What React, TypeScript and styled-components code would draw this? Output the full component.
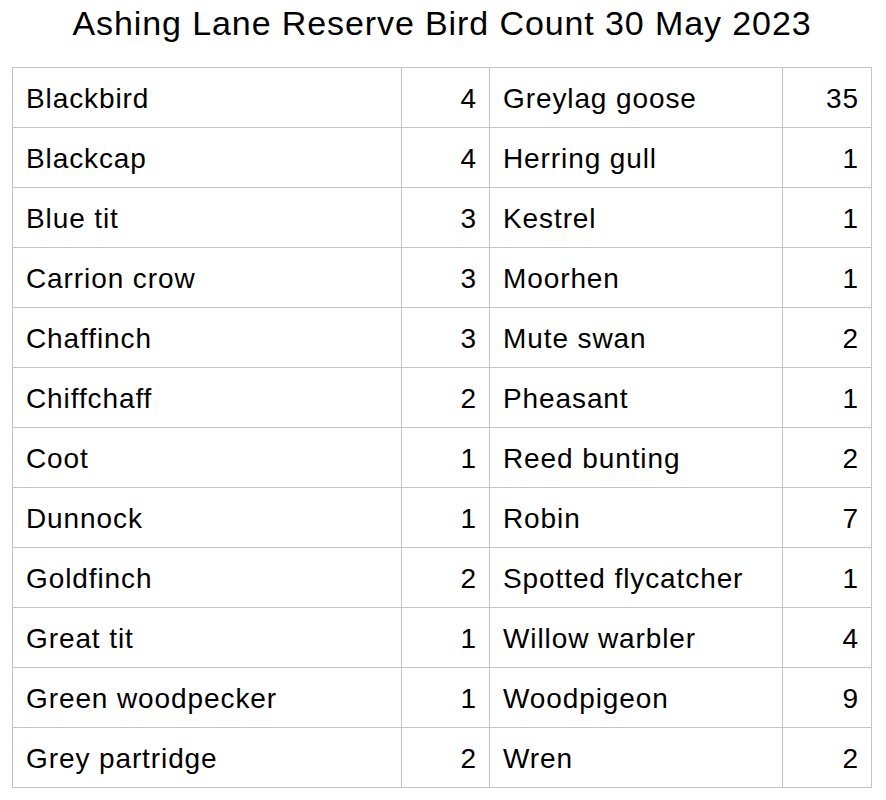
import React from "react";
import styled, { createGlobalStyle } from "styled-components";

// ---------------------------------------------------------------------------
// Data
// ---------------------------------------------------------------------------

type Sighting = { name: string; count: number };

const LEFT: Sighting[] = [
  { name: "Blackbird", count: 4 },
  { name: "Blackcap", count: 4 },
  { name: "Blue tit", count: 3 },
  { name: "Carrion crow", count: 3 },
  { name: "Chaffinch", count: 3 },
  { name: "Chiffchaff", count: 2 },
  { name: "Coot", count: 1 },
  { name: "Dunnock", count: 1 },
  { name: "Goldfinch", count: 2 },
  { name: "Great tit", count: 1 },
  { name: "Green woodpecker", count: 1 },
  { name: "Grey partridge", count: 2 },
];

const RIGHT: Sighting[] = [
  { name: "Greylag goose", count: 35 },
  { name: "Herring gull", count: 1 },
  { name: "Kestrel", count: 1 },
  { name: "Moorhen", count: 1 },
  { name: "Mute swan", count: 2 },
  { name: "Pheasant", count: 1 },
  { name: "Reed bunting", count: 2 },
  { name: "Robin", count: 7 },
  { name: "Spotted flycatcher", count: 1 },
  { name: "Willow warbler", count: 4 },
  { name: "Woodpigeon", count: 9 },
  { name: "Wren", count: 2 },
];

// ---------------------------------------------------------------------------
// Styled
// ---------------------------------------------------------------------------

const GlobalStyle = createGlobalStyle`
  html, body {
    margin: 0;
    padding: 0;
    background: #ffffff;
  }
  body {
    font-family: "Liberation Sans", Arial, sans-serif;
    color: #000000;
  }
`;

const Page = styled.div`
  width: 886px;
  padding: 4px 0 0 12px;
  box-sizing: border-box;
`;

const Title = styled.h1`
  margin: 0;
  width: 860px;
  height: 63px;
  font-size: 34px;
  font-weight: 400;
  line-height: 38px;
  text-align: center;
  letter-spacing: 0.9px;
`;

const Table = styled.table`
  border-collapse: collapse;
  table-layout: fixed;
  width: 860px;
`;

const Row = styled.tr`
  height: 60px;
`;

const Cell = styled.td<{ $num?: boolean }>`
  border: 1px solid #c4c4c4;
  padding: 3px ${(p) => (p.$num ? "12px" : "13px")} 0;
  font-size: 28px;
  letter-spacing: 0.9px;
  text-align: ${(p) => (p.$num ? "right" : "left")};
  vertical-align: middle;
  white-space: nowrap;
`;

// ---------------------------------------------------------------------------
// Component
// ---------------------------------------------------------------------------

export default function App() {
  return (
    <Page>
      <GlobalStyle />
      <Title>Ashing Lane Reserve Bird Count 30 May 2023</Title>
      <Table>
        <colgroup>
          <col style={{ width: 389 }} />
          <col style={{ width: 88 }} />
          <col style={{ width: 293 }} />
          <col style={{ width: 89 }} />
        </colgroup>
        <tbody>
          {LEFT.map((l, i) => (
            <Row key={l.name}>
              <Cell>{l.name}</Cell>
              <Cell $num>{l.count}</Cell>
              <Cell>{RIGHT[i].name}</Cell>
              <Cell $num>{RIGHT[i].count}</Cell>
            </Row>
          ))}
        </tbody>
      </Table>
    </Page>
  );
}
